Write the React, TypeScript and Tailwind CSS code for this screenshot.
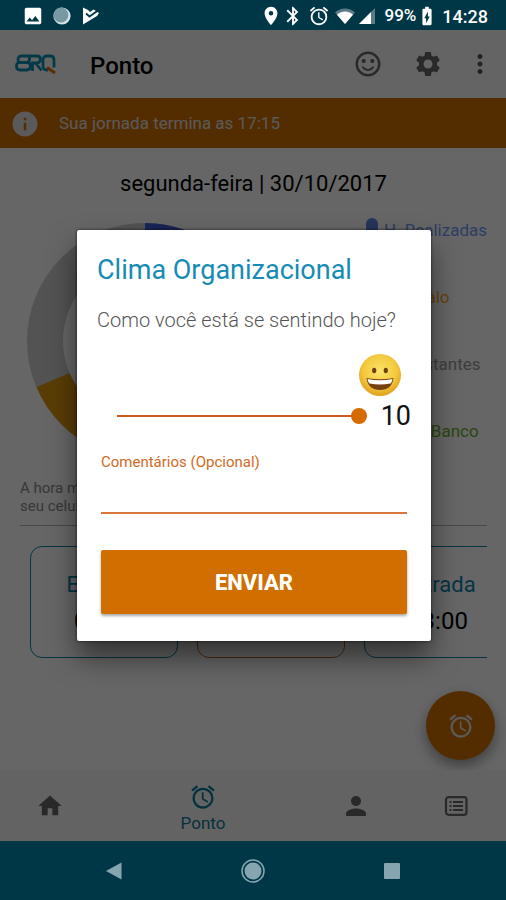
import { useState } from 'react';
import {
  MdAlarm,
  MdBatteryChargingFull,
  MdBluetooth,
  MdHome,
  MdImage,
  MdInfo,
  MdLocationOn,
  MdMoreVert,
  MdPerson,
  MdSentimentSatisfiedAlt,
  MdSettings,
} from 'react-icons/md';

const legend = [
  { label: 'H. Realizadas', text: 'text-[#6d9cf5]', dot: 'bg-[#5a86e0]' },
  { label: 'Intervalo', text: 'text-[#ffa51f]', dot: 'bg-[#ffa51f]' },
  { label: 'H. Restantes', text: 'text-[#9a9a9a]', dot: 'bg-[#9a9a9a]' },
  { label: 'Saldo Banco', text: 'text-[#6fae2c]', dot: 'bg-[#6fae2c]' },
];

const punches = [
  { label: 'Entrada', time: '08:00', border: 'border-[#0a84a8]', text: 'text-[#0a84a8]' },
  { label: 'Saída', time: '12:00', border: 'border-[#c4632a]', text: 'text-[#c4632a]' },
  { label: 'Entrada', time: '13:00', border: 'border-[#0a84a8]', text: 'text-[#0a84a8]' },
];

function StatusBar() {
  return (
    <div className="flex h-[30px] shrink-0 items-center justify-between bg-[#003747] pt-0.5 pr-[18px] pl-[22px] text-white">
      <div className="flex items-center gap-2">
        <MdImage className="size-[22px]" />
        <svg viewBox="0 0 20 20" className="size-5">
          <circle cx="10" cy="10" r="8.6" fill="#d5e2e6" />
          <circle cx="9" cy="9" r="7.4" fill="#7799a4" />
        </svg>
        <svg viewBox="0 0 20 20" className="size-5">
          <path d="M3 1.500L8 4l2 2 3.500-2.500L19 7l-2 3L3 18.500z" fill="#fff" />
          <path d="M6 7.500l3.500 3L18 4.500" fill="none" stroke="#003747" strokeWidth="1.800" />
        </svg>
      </div>
      <div className="flex items-center">
        <MdLocationOn className="size-[22px]" />
        <MdBluetooth className="size-[22px]" />
        <MdAlarm className="ml-1 size-[22px]" />
        <svg viewBox="0 0 22 18" className="ml-1 h-[18px] w-[22px]">
          <path d="M1 5.500C7 .2 15 .2 21 5.500L11 17z" fill="#fff" opacity=".35" />
          <path d="M3 7.800C8 3.500 14 3.500 19 7.800L11 17z" fill="#fff" />
        </svg>
        <svg viewBox="0 0 18 18" className="ml-0.5 size-[18px]">
          <path d="M17 1v16H1z" fill="#fff" opacity=".35" />
          <path d="M13 5v12H1z" fill="#fff" />
        </svg>
        <span className="ml-2 text-[17px] font-medium">99%</span>
        <MdBatteryChargingFull className="size-[22px]" />
        <span className="ml-1 text-[18px] font-medium">14:28</span>
      </div>
    </div>
  );
}

function Logo() {
  return (
    <svg viewBox="0 0 41 22" className="h-[22px] w-[41px]" fill="none" stroke="#0a8fb5" strokeWidth="2.800" role="img" aria-label="BRQ">
      <path d="M14 9.500H5q-2-.5-2-3t2.500-3.500H22q3.500 0 3.500 3.300T22 10h-4.500v8M20.500 10l6 7.500" />
      <path d="M3 9.500h9q3.500 0 3.500 3.500T12 17H5q-3.500 0-3.500-3.500v-1Q1.500 10 4 9.500M12 9.500q2.500-.5 2.500-3.500V3" />
      <path d="M33 17h-1q-4 0-4-4V7q0-4 4-4h3q4 0 4 4v7.500" />
      <path d="M32 14.500l8 5.500" stroke="#e8710a" strokeWidth="3.200" />
    </svg>
  );
}

function Header() {
  return (
    <header className="flex h-[68px] items-center bg-[#fafafa] pr-[11px] pl-[15px]">
      <Logo />
      <h1 className="ml-[34px] flex-1 pt-1 text-2xl font-medium text-black">Ponto</h1>
      <button type="button" aria-label="Clima" className="text-[#666]">
        <MdSentimentSatisfiedAlt className="size-[30px]" />
      </button>
      <button type="button" aria-label="Configurações" className="ml-[30px] text-[#666]">
        <MdSettings className="size-[30px]" />
      </button>
      <button type="button" aria-label="Mais opções" className="ml-[22px] text-[#555]">
        <MdMoreVert className="size-[30px]" />
      </button>
    </header>
  );
}

function Chart() {
  return (
    <svg viewBox="0 0 236 236" className="size-[236px]" fill="none" strokeWidth="36">
      <circle cx="118" cy="118" r="100" stroke="#cfcfcf" />
      <path d="M118 18A100 100 0 0 1 152 24" stroke="#3c5bd8" />
      <path d="M26 157A100 100 0 0 0 160 209" stroke="#e09a10" />
    </svg>
  );
}

function Content() {
  return (
    <main className="relative flex-1 bg-white pt-5 pr-[19px] pl-5">
      <h2 className="text-center text-[22px] leading-8 text-black">segunda-feira | 30/10/2017</h2>
      <div className="mt-[23px] flex justify-between pl-[7px]">
        <Chart />
        <ul className="mt-[-5px] flex flex-col gap-[43px]">
          {legend.map((item) => (
            <li key={item.label} className={`flex items-center gap-1.5 text-[17px] leading-6 ${item.text}`}>
              <span className={`h-6 w-3 rounded-full ${item.dot}`} />
              {item.label}
            </li>
          ))}
        </ul>
      </div>
      <p className="mt-5 text-[15px] leading-[18px] text-[#8a8a8a]">
        A hora mostrada pode ser diferente da hora do servidor e do
        <br />
        seu celular
      </p>
      <hr className="mt-[10px] border-[#b5b5b5]" />
      <div className="mt-5 flex gap-[19px] overflow-hidden pl-[10px]">
        {punches.map((punch, i) => (
          <div key={i} className={`flex h-28 w-[148px] shrink-0 flex-col items-center rounded-xl border pt-[22px] ${punch.border}`}>
            <span className={`text-[22px] leading-8 ${punch.text}`}>{punch.label}</span>
            <span className="mt-1 text-2xl leading-8 text-black">{punch.time}</span>
          </div>
        ))}
      </div>
      <button
        type="button"
        aria-label="Marcar ponto"
        className="absolute right-[11px] bottom-[10px] flex size-[69px] items-center justify-center rounded-full bg-[#d06e00] text-[#e0e0e0] shadow-[0_6px_14px_rgba(0,0,0,0.4)]"
      >
        <MdAlarm className="size-7" />
      </button>
    </main>
  );
}

function BottomNav() {
  return (
    <nav className="relative flex h-[71px] bg-[#f7f7f7] text-[#666]">
      <a href="#home" aria-label="Início" className="flex w-[100px] items-center justify-center">
        <MdHome className="size-7" />
      </a>
      <a href="#ponto" className="flex flex-1 flex-col items-center justify-center pt-1.5 text-[#0a7a9c]">
        <MdAlarm className="size-7" />
        <span className="text-[17px] leading-6">Ponto</span>
      </a>
      <a href="#perfil" aria-label="Perfil" className="flex w-[100px] items-center justify-center">
        <MdPerson className="size-[30px]" />
      </a>
      <a href="#lista" aria-label="Lista" className="flex w-[100px] items-center justify-center">
        <svg viewBox="0 0 24 20" className="h-5 w-6" fill="none" stroke="currentColor">
          <rect x="2" y="1.200" width="20.500" height="17.600" rx="2.500" strokeWidth="2.200" />
          <path d="M5.500 6h2M9 6h10M5.500 10h2M9 10h10M5.500 14h2M9 14h10" strokeWidth="1.800" />
        </svg>
      </a>
    </nav>
  );
}

function Emoji() {
  return (
    <svg viewBox="0 0 42 42" className="size-[42px]" role="img" aria-label="Feliz">
      <defs>
        <radialGradient id="face" cx="50%" cy="40%" r="60%">
          <stop offset="0" stopColor="#fbe36a" />
          <stop offset=".65" stopColor="#f3c93c" />
          <stop offset="1" stopColor="#dfa01f" />
        </radialGradient>
      </defs>
      <circle cx="21" cy="21" r="21" fill="url(#face)" />
      <ellipse cx="15.200" cy="16.500" rx="2.100" ry="2.800" fill="#6b3f12" />
      <ellipse cx="26.800" cy="16.500" rx="2.100" ry="2.800" fill="#6b3f12" />
      <path d="M7.500 24Q21 26.500 34.500 24Q33 36 21 36T7.500 24z" fill="#77400f" />
      <path d="M8.500 25Q21 27.500 33.500 25Q33 28.500 31.500 29.500Q21 31.500 10.500 29.500Q9 28 8.500 25z" fill="#fff" />
    </svg>
  );
}

function MoodDialog() {
  const [mood, setMood] = useState(10);

  return (
    <div className="absolute inset-0 flex items-center justify-center bg-black/60 pr-[75px] pl-[77px]">
      <form
        role="dialog"
        aria-labelledby="mood-title"
        onSubmit={(e) => e.preventDefault()}
        className="w-full max-w-md rounded-xs bg-white px-5 pt-6 pb-[27px] shadow-[0_16px_28px_rgba(0,0,0,0.5),0_0_3px_rgba(0,0,0,0.7)]"
      >
        <h2 id="mood-title" className="text-[27px] leading-8 text-[#158bb5]">Clima Organizacional</h2>
        <label htmlFor="mood" className="mt-[22px] block text-xl leading-6 font-light text-[#555]">
          Como você está se sentindo hoje?
        </label>
        <div className="mt-[22px] flex justify-end pr-[10px]">
          <Emoji />
        </div>
        <div className="mt-1 flex items-center gap-[14px] pl-5">
          <input
            id="mood"
            type="range"
            min={0}
            max={10}
            value={mood}
            onChange={(e) => setMood(Number(e.target.value))}
            className="h-4 min-w-0 flex-1 appearance-none bg-transparent [&::-webkit-slider-runnable-track]:h-0.5 [&::-webkit-slider-runnable-track]:bg-[#cb5a20] [&::-webkit-slider-thumb]:mt-[-7px] [&::-webkit-slider-thumb]:size-4 [&::-webkit-slider-thumb]:appearance-none [&::-webkit-slider-thumb]:rounded-full [&::-webkit-slider-thumb]:bg-[#d46a00]"
          />
          <output htmlFor="mood" className="text-[27px] leading-8 text-[#111]">{mood}</output>
        </div>
        <div className="mt-5 px-1">
          <label htmlFor="comments" className="block text-[15px] leading-5 text-[#d2691e]">
            Comentários (Opcional)
          </label>
          <input
            id="comments"
            type="text"
            className="block h-[42px] w-full border-b-2 border-[#d9763f] text-lg text-[#333] outline-none"
          />
          <button
            type="submit"
            className="mt-9 h-16 w-full rounded-xs bg-[#d06e00] text-[22px] font-extrabold text-white shadow-[0_2px_3px_rgba(0,0,0,0.35)]"
          >
            ENVIAR
          </button>
        </div>
      </form>
    </div>
  );
}

function SystemNav() {
  return (
    <div className="flex h-[59px] shrink-0 items-center justify-center gap-[115px] bg-[#003747] text-[#85a6b0]">
      <button type="button" aria-label="Voltar">
        <svg viewBox="0 0 24 24" className="size-6" fill="currentColor">
          <path d="M19.500 3.500v17L4 12z" />
        </svg>
      </button>
      <button type="button" aria-label="Tela inicial">
        <svg viewBox="0 0 24 24" className="size-6">
          <circle cx="12" cy="12" r="11" fill="none" stroke="currentColor" strokeWidth="1.500" />
          <circle cx="12" cy="12" r="8.500" fill="currentColor" />
        </svg>
      </button>
      <button type="button" aria-label="Recentes">
        <svg viewBox="0 0 24 24" className="size-6" fill="currentColor">
          <rect x="4" y="4" width="16" height="16" rx="1" />
        </svg>
      </button>
    </div>
  );
}

export default function App() {
  return (
    <div className="flex min-h-screen flex-col font-[Roboto,sans-serif]">
      <StatusBar />
      <div className="relative flex flex-1 flex-col">
        <Header />
        <div className="flex h-[50px] items-center bg-[#d06e00] pt-0.5 pl-[10px] text-[#e0e0e0]">
          <MdInfo className="size-[30px]" />
          <span className="ml-[19px] text-[17px]">Sua jornada termina as 17:15</span>
        </div>
        <Content />
        <BottomNav />
        <MoodDialog />
      </div>
      <SystemNav />
    </div>
  );
}
